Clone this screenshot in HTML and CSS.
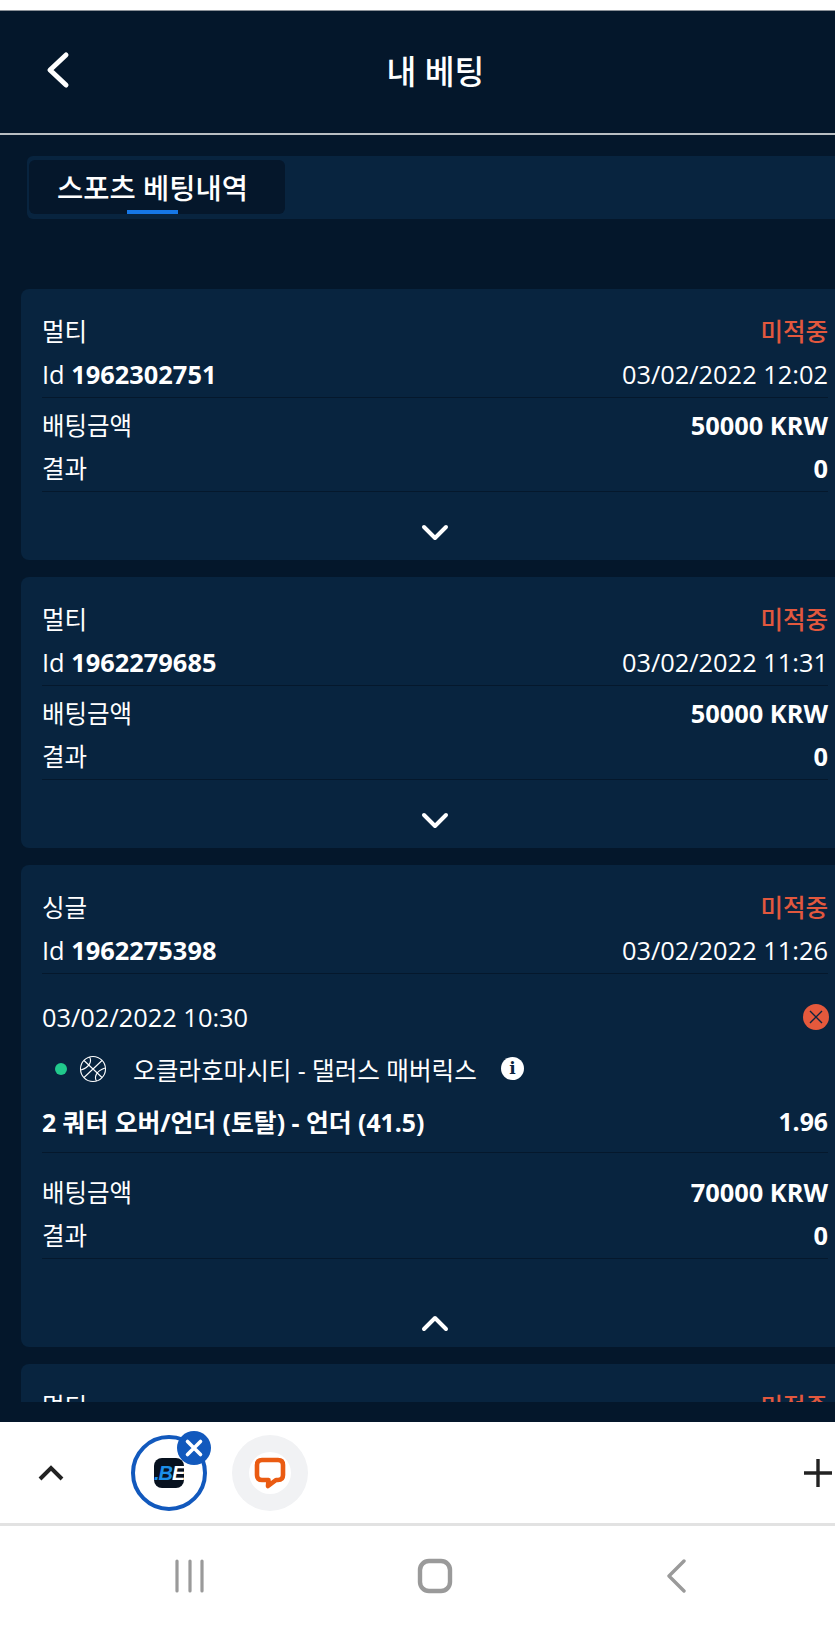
FILE: index.html
```html
<!DOCTYPE html>
<html lang="ko">

<head>
  <meta charset="UTF-8">
  <meta name="viewport" content="width=device-width, initial-scale=1.0">
  <title>내 베팅</title>
  <link rel="stylesheet" href="styles.css">
</head>

<body>
  <div class="status-strip"></div>

  <div class="screen">
    <header class="top-bar">
      <svg class="back-icon" width="26" height="40" viewBox="0 0 26 40">
        <path d="M21 5 L5 20 L21 35" fill="none" stroke="#fff" stroke-width="5" stroke-linecap="round" stroke-linejoin="round" />
      </svg>
      <h1 class="title">내 베팅</h1>
    </header>

    <nav class="tabs">
      <div class="tab">스포츠 베팅내역</div>
    </nav>

    <div class="list">
      <section class="card">
        <div class="row"><span class="ko">멀티</span><span class="ko lost">미적중</span></div>
        <div class="row row-line"><span>Id <b>1962302751</b></span><span>03/02/2022 12:02</span></div>
        <div class="row row-first"><span class="ko">배팅금액</span><b>50000 KRW</b></div>
        <div class="row row-line"><span class="ko">결과</span><b>0</b></div>
        <div class="toggle">
          <svg width="28" height="18" viewBox="0 0 28 18"><path d="M3 3 L14 14 L25 3" fill="none" stroke="#fff" stroke-width="4" stroke-linecap="round" stroke-linejoin="round" /></svg>
        </div>
      </section>

      <section class="card">
        <div class="row"><span class="ko">멀티</span><span class="ko lost">미적중</span></div>
        <div class="row row-line"><span>Id <b>1962279685</b></span><span>03/02/2022 11:31</span></div>
        <div class="row row-first"><span class="ko">배팅금액</span><b>50000 KRW</b></div>
        <div class="row row-line"><span class="ko">결과</span><b>0</b></div>
        <div class="toggle">
          <svg width="28" height="18" viewBox="0 0 28 18"><path d="M3 3 L14 14 L25 3" fill="none" stroke="#fff" stroke-width="4" stroke-linecap="round" stroke-linejoin="round" /></svg>
        </div>
      </section>

      <section class="card">
        <div class="row"><span class="ko">싱글</span><span class="ko lost">미적중</span></div>
        <div class="row row-line"><span>Id <b>1962275398</b></span><span>03/02/2022 11:26</span></div>

        <div class="row event-date">
          <span>03/02/2022 10:30</span>
          <svg class="miss-icon" width="26" height="26" viewBox="0 0 26 26">
            <circle cx="13" cy="13" r="13" fill="#e5593c" />
            <path d="M7 7 L19 19 M19 7 L7 19" stroke="#0b2540" stroke-width="1.4" />
          </svg>
        </div>
        <div class="event-name">
          <span class="live-dot"></span>
          <svg class="ball" width="28" height="28" viewBox="0 0 28 28" fill="none" stroke="#fff" stroke-width="1.1">
            <circle cx="14" cy="14" r="12.5" />
            <path d="M5 5.5 L23 22.5 M23 5.5 L5 22.5 M10.5 2 C13 6 11 12 2 15 M17.5 26 C15 22 17 16 26 13" />
          </svg>
          <span class="teams">오클라호마시티 - 댈러스 매버릭스</span>
          <span class="info">i</span>
        </div>
        <div class="row row-line market"><b>2 쿼터 오버/언더 (토탈) - 언더 (41.5)</b><b>1.96</b></div>

        <div class="row row-first amount"><span class="ko">배팅금액</span><b>70000 KRW</b></div>
        <div class="row row-line"><span class="ko">결과</span><b>0</b></div>
        <div class="toggle toggle-open">
          <svg width="28" height="18" viewBox="0 0 28 18"><path d="M3 15 L14 4 L25 15" fill="none" stroke="#fff" stroke-width="4" stroke-linecap="round" stroke-linejoin="round" /></svg>
        </div>
      </section>

      <section class="card">
        <div class="row"><span class="ko">멀티</span><span class="ko lost">미적중</span></div>
      </section>
    </div>
  </div>

  <div class="app-tray">
    <svg width="30" height="20" viewBox="0 0 30 20"><path d="M4 16 L15 5 L26 16" fill="none" stroke="#222" stroke-width="4" /></svg>
    <div class="bubble bubble-active">
      <span class="be-logo"><i>.B</i><i class="be-e">E</i></span>
      <span class="bubble-close">
        <svg width="20" height="20" viewBox="0 0 20 20"><path d="M3.5 3.5 L16.5 16.5 M16.5 3.5 L3.5 16.5" stroke="#fff" stroke-width="3.6" stroke-linecap="round" /></svg>
      </span>
    </div>
    <div class="bubble bubble-chat">
      <span class="chat-inner">
        <svg width="34" height="34" viewBox="0 0 34 34"><path d="M9 4 H25 Q30 4 30 9 V19 Q30 24 25 24 H23 L15 30 L15.5 24 H9 Q4 24 4 19 V9 Q4 4 9 4 Z" fill="none" stroke="#ea5b12" stroke-width="4.6" stroke-linejoin="round" /></svg>
      </span>
    </div>
    <svg class="plus" width="32" height="32" viewBox="0 0 32 32"><path d="M16 2 V30 M2 16 H30" stroke="#222" stroke-width="3.4" /></svg>
  </div>

  <div class="nav-bar">
    <svg width="30" height="34" viewBox="0 0 30 34"><path d="M2 2 V32 M15 2 V32 M27 2 V32" stroke="#9a9a9a" stroke-width="3.2" stroke-linecap="round" /></svg>
    <svg width="36" height="36" viewBox="0 0 36 36"><rect x="3" y="3" width="30" height="30" rx="9" fill="none" stroke="#9a9a9a" stroke-width="4.4" /></svg>
    <svg width="22" height="34" viewBox="0 0 22 34"><path d="M19 2 L4 17 L19 32" fill="none" stroke="#9a9a9a" stroke-width="3.4" stroke-linecap="round" stroke-linejoin="round" /></svg>
  </div>
</body>

</html>
```

FILE: styles.css
```css
* {
  box-sizing: border-box;
}

body {
  margin: 0;
  height: 1625px;
  overflow: hidden;
  display: flex;
  flex-direction: column;
  background: #fff;
  color: #fff;
  font-family: "Open Sans", "Noto Sans CJK KR", sans-serif;
  font-size: 25.4px;
}

.status-strip {
  height: 11px;
  background: #fff;
  border-bottom: 1px solid #8b9198;
}

.screen {
  height: 1411px;
  background: #04172b;
}

.top-bar {
  height: 124px;
  position: relative;
  display: flex;
  align-items: center;
  justify-content: center;
  padding: 0 0 6px 36px;
  border-bottom: 2px solid #b9bec2;
}

.back-icon {
  position: absolute;
  left: 45px;
  top: 39px;
}

.title {
  margin: 0;
  font-size: 32.4px;
  font-weight: 500;
}

.tabs {
  height: 63px;
  margin: 21px 0 70px 27px;
  padding: 4px 0 5px 2px;
  background: #08243f;
  border-radius: 6px 0 0 6px;
}

.tab {
  width: 256px;
  height: 54px;
  position: relative;
  padding-left: 28px;
  line-height: 56px;
  font-size: 28.5px;
  font-weight: 500;
  background: #05172b;
  border-radius: 6px;
}

.tab::after {
  content: "";
  position: absolute;
  left: 98px;
  bottom: 0;
  width: 51px;
  height: 4px;
  background: #1677e6;
}

.list {
  height: 1113px;
  overflow: hidden;
  padding-left: 21px;
}

.card {
  margin-bottom: 17px;
  padding: 22px 7px 0 21px;
  background: #08243f;
  border-radius: 8px 0 0 8px;
}

.row {
  height: 43px;
  padding-bottom: 4px;
  display: flex;
  align-items: center;
  justify-content: space-between;
}

.row-line {
  height: 44px;
  border-bottom: 1px solid #05182c;
}

.row-first {
  margin-top: 7px;
}

.ko {
  font-size: 24.5px;
}

.lost {
  color: #e2583e;
  font-weight: 500;
}

.toggle {
  height: 68px;
  padding-top: 14px;
  display: flex;
  align-items: center;
  justify-content: center;
}

.toggle-open {
  height: 88px;
  padding-top: 40px;
}

.event-date {
  margin-top: 23px;
  height: 43px;
}

.miss-icon {
  margin-right: -1px;
}

.event-name {
  height: 60px;
  padding-bottom: 3px;
  display: flex;
  align-items: center;
}

.live-dot {
  width: 12px;
  height: 12px;
  margin-left: 13px;
  border-radius: 50%;
  background: #21c98c;
}

.ball {
  margin-left: 12px;
}

.teams {
  margin-left: 26px;
  font-size: 24.6px;
}

.info {
  width: 23px;
  height: 23px;
  margin-left: 24px;
  border-radius: 50%;
  background: #fff;
  color: #0a2540;
  font-family: "DejaVu Serif", serif;
  font-size: 17px;
  font-weight: 700;
  line-height: 23px;
  text-align: center;
}

.market {
  height: 53px;
  padding-bottom: 11px;
  font-size: 24.8px;
}

.amount {
  margin-top: 19px;
}

.app-tray {
  height: 104px;
  position: relative;
  display: flex;
  align-items: center;
  padding: 0 1px 0 36px;
  background: #fff;
  border-bottom: 3px solid #e2e2e2;
}

.bubble {
  width: 76px;
  height: 76px;
  border-radius: 50%;
  display: flex;
  align-items: center;
  justify-content: center;
  position: relative;
}

.bubble-active {
  margin-left: 65px;
  border: 4px solid #1259bd;
}

.be-logo {
  width: 30px;
  height: 30px;
  border-radius: 8px;
  background: #07111f;
  font-family: "Liberation Sans", sans-serif;
  font-size: 20px;
  font-weight: 700;
  letter-spacing: -1px;
  line-height: 30px;
  text-align: center;
  color: #1c8fe8;
}

.be-e {
  color: #fff;
}

.bubble-close {
  position: absolute;
  top: -8px;
  right: -8px;
  width: 34px;
  height: 34px;
  border-radius: 50%;
  background: #1259bd;
  display: flex;
  align-items: center;
  justify-content: center;
}

.bubble-chat {
  margin-left: 25px;
  background: #f1f2f4;
}

.chat-inner {
  width: 42px;
  height: 42px;
  border-radius: 50%;
  background: #fff;
  display: flex;
  align-items: center;
  justify-content: center;
}

.plus {
  margin-left: auto;
}

.nav-bar {
  flex: 1;
  position: relative;
  display: flex;
  align-items: center;
  background: #fff;
  padding: 0 148px 0 175px;
  justify-content: space-between;
}
```
